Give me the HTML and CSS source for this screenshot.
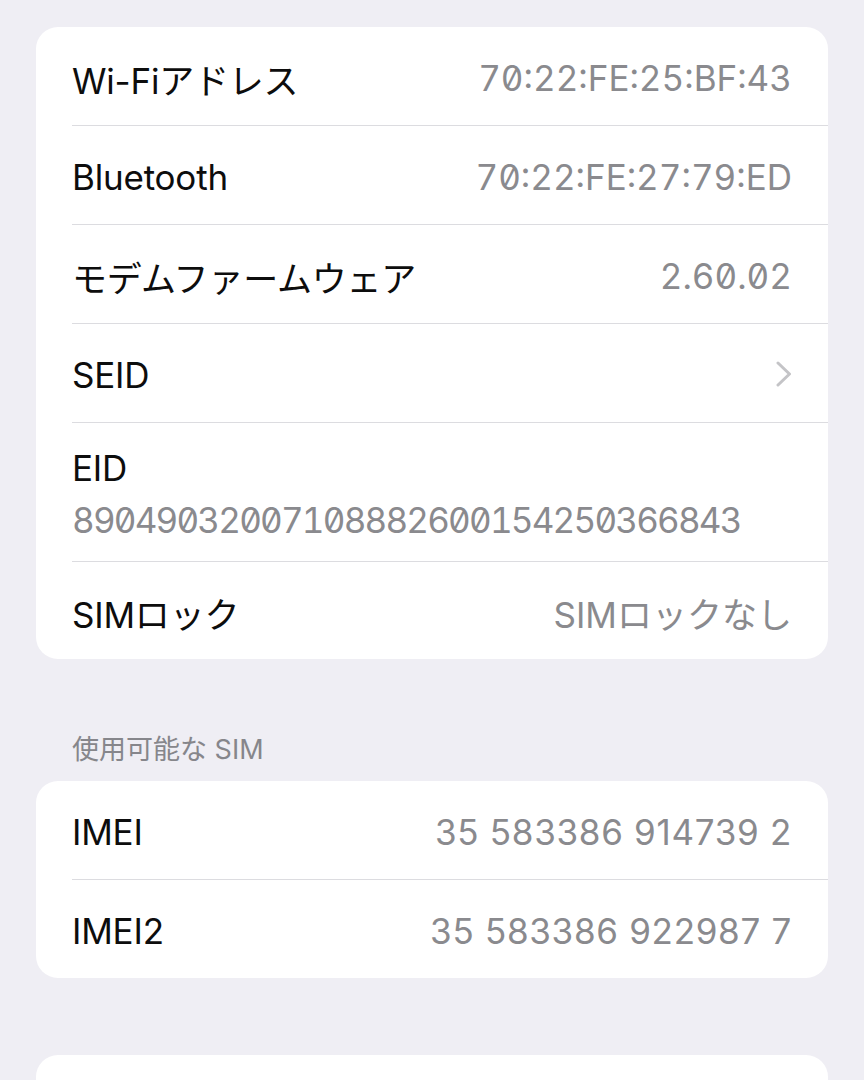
FILE: index.html
```html
<!DOCTYPE html>
<html lang="ja">
<head>
    <meta charset="UTF-8">
    <meta name="viewport" content="width=device-width, initial-scale=1.0">
    <title>情報</title>
    <link rel="stylesheet" href="styles.css">
</head>
<body>
    <div class="page">
        <div class="group">
            <div class="row">
                <span class="label">Wi-Fiアドレス</span>
                <span class="value mono">70:22:FE:25:BF:43</span>
            </div>
            <div class="row">
                <span class="label">Bluetooth</span>
                <span class="value mono">70:22:FE:27:79:ED</span>
            </div>
            <div class="row">
                <span class="label">モデムファームウェア</span>
                <span class="value mono">2.60.02</span>
            </div>
            <div class="row">
                <span class="label">SEID</span>
                <svg class="chevron" width="16" height="26" viewBox="0 0 16 26">
                    <polyline points="2,2 13.5,13 2,24" fill="none" stroke="#c4c4c7" stroke-width="3" stroke-linecap="round" stroke-linejoin="round"/>
                </svg>
            </div>
            <div class="row row-stack">
                <span class="label">EID</span>
                <span class="value mono eid">89049032007108882600154250366843</span>
            </div>
            <div class="row row-last">
                <span class="label">SIMロック</span>
                <span class="value">SIMロックなし</span>
            </div>
        </div>

        <div class="section-title">使用可能な SIM</div>
        <div class="group">
            <div class="row">
                <span class="label">IMEI</span>
                <span class="value imei">35 583386 914739 2</span>
            </div>
            <div class="row">
                <span class="label">IMEI2</span>
                <span class="value imei">35 583386 922987 7</span>
            </div>
        </div>

        <div class="group group-next">
            <div class="row"></div>
        </div>
    </div>
</body>
</html>
```

FILE: styles.css
```css
body {
    margin: 0;
    padding: 0;
    background: #efeef4;
    font-family: Inter, "Noto Sans CJK JP", sans-serif;
    color: #0d0d0d;
}
.page {
    padding: 27px 36px 0 36px;
}
.group {
    background: #ffffff;
    border-radius: 22px;
    overflow: hidden;
}
.row {
    display: flex;
    align-items: center;
    justify-content: space-between;
    min-height: 99px;
    margin-left: 36px;
    padding-right: 36px;
    border-top: 1px solid #dcdce0;
    box-sizing: border-box;
}
.row:first-child {
    border-top: none;
    min-height: 98px;
}
.row-last {
    min-height: 98px;
}
.label {
    font-size: 35px;
    letter-spacing: -0.2px;
    padding-top: 4px;
}
.value {
    font-size: 35px;
    color: #8a8a8e;
    padding-top: 4px;
}
.mono {
    font-feature-settings: "tnum", "zero";
}
.eid {
    letter-spacing: -1.8px;
}
.imei {
    letter-spacing: 0.7px;
}
.row-stack {
    flex-direction: column;
    align-items: flex-start;
    justify-content: center;
    min-height: 139px;
    gap: 6px;
}
.chevron {
    display: block;
    margin-top: 2px;
}
.section-title {
    margin: 75px 0 15px 36px;
    font-size: 27px;
    line-height: 32px;
    color: #86868b;
}
.group-next {
    margin-top: 77px;
}
```
